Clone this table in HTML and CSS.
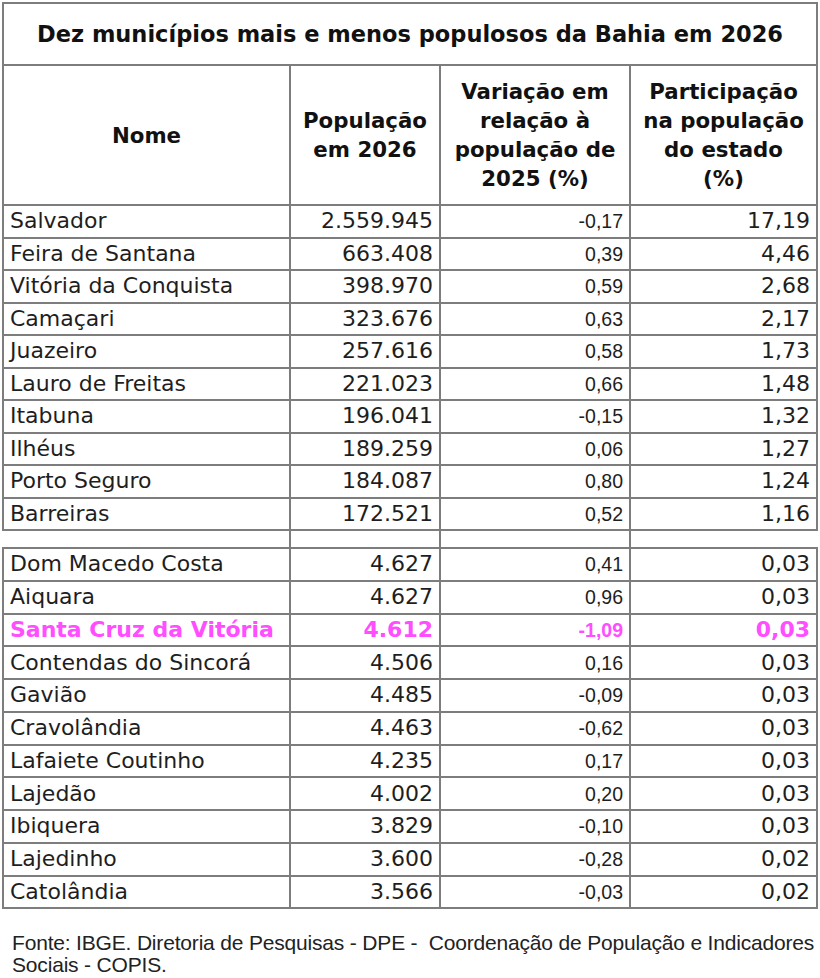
FILE: index.html
```html
<!DOCTYPE html>
<html lang="pt-BR">
<head>
<meta charset="utf-8">
<title>Dez municípios mais e menos populosos da Bahia em 2026</title>
<link rel="stylesheet" href="styles.css">
</head>
<body>
<table class="tbl">
  <colgroup>
    <col class="c1"><col class="c2"><col class="c3"><col class="c4">
  </colgroup>
  <thead>
    <tr class="title-row"><th colspan="4">Dez municípios mais e menos populosos da Bahia em 2026</th></tr>
    <tr class="head-row">
      <th>Nome</th>
      <th>População<br>em 2026</th>
      <th>Variação em<br>relação à<br>população de<br>2025 (%)</th>
      <th>Participação<br>na população<br>do estado<br>(%)</th>
    </tr>
  </thead>
  <tbody class="top">
    <tr><td class="name">Salvador</td><td class="num">2.559.945</td><td class="var">-0,17</td><td class="num">17,19</td></tr>
    <tr><td class="name">Feira de Santana</td><td class="num">663.408</td><td class="var">0,39</td><td class="num">4,46</td></tr>
    <tr><td class="name">Vitória da Conquista</td><td class="num">398.970</td><td class="var">0,59</td><td class="num">2,68</td></tr>
    <tr><td class="name">Camaçari</td><td class="num">323.676</td><td class="var">0,63</td><td class="num">2,17</td></tr>
    <tr><td class="name">Juazeiro</td><td class="num">257.616</td><td class="var">0,58</td><td class="num">1,73</td></tr>
    <tr><td class="name">Lauro de Freitas</td><td class="num">221.023</td><td class="var">0,66</td><td class="num">1,48</td></tr>
    <tr><td class="name">Itabuna</td><td class="num">196.041</td><td class="var">-0,15</td><td class="num">1,32</td></tr>
    <tr><td class="name">Ilhéus</td><td class="num">189.259</td><td class="var">0,06</td><td class="num">1,27</td></tr>
    <tr><td class="name">Porto Seguro</td><td class="num">184.087</td><td class="var">0,80</td><td class="num">1,24</td></tr>
    <tr><td class="name">Barreiras</td><td class="num">172.521</td><td class="var">0,52</td><td class="num">1,16</td></tr>
  </tbody>
  <tbody class="spacer">
    <tr class="gap"><td></td><td></td><td></td><td></td></tr>
  </tbody>
  <tbody class="bottom">
    <tr><td class="name">Dom Macedo Costa</td><td class="num">4.627</td><td class="var">0,41</td><td class="num">0,03</td></tr>
    <tr><td class="name">Aiquara</td><td class="num">4.627</td><td class="var">0,96</td><td class="num">0,03</td></tr>
    <tr class="hl"><td class="name">Santa Cruz da Vitória</td><td class="num">4.612</td><td class="var">-1,09</td><td class="num">0,03</td></tr>
    <tr><td class="name">Contendas do Sincorá</td><td class="num">4.506</td><td class="var">0,16</td><td class="num">0,03</td></tr>
    <tr><td class="name">Gavião</td><td class="num">4.485</td><td class="var">-0,09</td><td class="num">0,03</td></tr>
    <tr><td class="name">Cravolândia</td><td class="num">4.463</td><td class="var">-0,62</td><td class="num">0,03</td></tr>
    <tr><td class="name">Lafaiete Coutinho</td><td class="num">4.235</td><td class="var">0,17</td><td class="num">0,03</td></tr>
    <tr><td class="name">Lajedão</td><td class="num">4.002</td><td class="var">0,20</td><td class="num">0,03</td></tr>
    <tr><td class="name">Ibiquera</td><td class="num">3.829</td><td class="var">-0,10</td><td class="num">0,03</td></tr>
    <tr><td class="name">Lajedinho</td><td class="num">3.600</td><td class="var">-0,28</td><td class="num">0,02</td></tr>
    <tr><td class="name">Catolândia</td><td class="num">3.566</td><td class="var">-0,03</td><td class="num">0,02</td></tr>
  </tbody>
</table>
<p class="source">Fonte: IBGE. Diretoria de Pesquisas - DPE - &nbsp;Coordenação de População e Indicadores Sociais - COPIS.</p>
</body>
</html>
```

FILE: styles.css
```css
html, body {
  margin: 0;
  padding: 0;
  background: #ffffff;
}

body {
  font-family: "DejaVu Sans", Verdana, sans-serif;
  color: #1e1e1e;
}

.tbl {
  border-collapse: collapse;
  table-layout: fixed;
  width: 814px;
  margin: 2px 0 0 2px;
}

.c1 { width: 287px; }
.c2 { width: 150px; }
.c3 { width: 190px; }
.c4 { width: 187px; }

.tbl th,
.tbl td {
  border: 2px solid #7d7d7d;
  padding: 0 6px;
  white-space: nowrap;
  overflow: hidden;
}

.title-row th {
  height: 60px;
  font-size: 22.5px;
  font-weight: bold;
  text-align: center;
  color: #111;
  padding: 0;
}

.head-row th {
  height: 138px;
  font-size: 21.3px;
  font-weight: bold;
  line-height: 29px;
  text-align: center;
  vertical-align: middle;
  color: #111;
  padding: 0 2px;
}

.top tr {
  height: 32.5px;
}

.bottom tr {
  height: 32.75px;
}

.tbl td {
  font-size: 22px;
  line-height: 28px;
}

.name {
  text-align: left;
}

.num {
  text-align: right;
}

.tbl td.var {
  text-align: right;
  font-family: "Liberation Sans", Arial, sans-serif;
  font-size: 19.5px;
}

tr.gap {
  height: 18px;
}

tr.gap td:first-child {
  border-left-style: hidden;
}

tr.gap td:last-child {
  border-right-style: hidden;
}

tr.hl td {
  color: #ff4dff;
  font-weight: bold;
}

.source {
  margin: 23px 0 0 12px;
  font-family: "Liberation Sans", Arial, sans-serif;
  font-size: 21px;
  line-height: 22px;
  letter-spacing: -0.18px;
  color: #222;
  width: 808px;
}
```
